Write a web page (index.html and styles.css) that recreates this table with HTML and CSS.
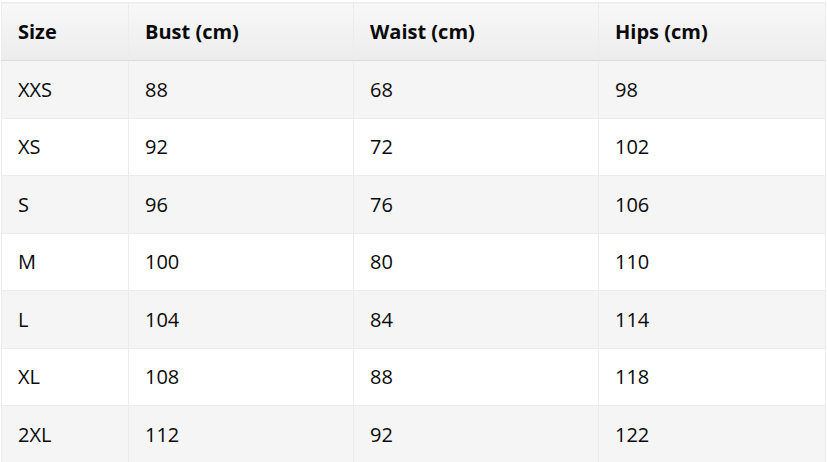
FILE: index.html
```html
<!DOCTYPE html>
<html>
<head>
<meta charset="utf-8">
<link rel="stylesheet" href="styles.css">
</head>
<body>
<table class="size-table">
  <colgroup>
    <col class="c1"><col class="c2"><col class="c3"><col class="c4">
  </colgroup>
  <thead>
    <tr><th>Size</th><th>Bust (cm)</th><th>Waist (cm)</th><th>Hips (cm)</th></tr>
  </thead>
  <tbody>
    <tr><td>XXS</td><td>88</td><td>68</td><td>98</td></tr>
    <tr><td>XS</td><td>92</td><td>72</td><td>102</td></tr>
    <tr><td>S</td><td>96</td><td>76</td><td>106</td></tr>
    <tr><td>M</td><td>100</td><td>80</td><td>110</td></tr>
    <tr><td>L</td><td>104</td><td>84</td><td>114</td></tr>
    <tr><td>XL</td><td>108</td><td>88</td><td>118</td></tr>
    <tr><td>2XL</td><td>112</td><td>92</td><td>122</td></tr>
  </tbody>
</table>
</body>
</html>
```
FILE: styles.css
```css
html, body {
  margin: 0;
  padding: 0;
  background: #ffffff;
}
body {
  padding: 2px 2px 0 1px;
  font-family: "Open Sans", "Noto Sans", sans-serif;
  color: #0a0a0a;
}
.size-table {
  width: 824px;
  border-collapse: collapse;
  table-layout: fixed;
  font-size: 20px;
}
.c1 { width: 127px; }
.c2 { width: 225px; }
.c3 { width: 245px; }
.c4 { width: 227px; }
.size-table th,
.size-table td {
  text-align: left;
  padding: 0 16px;
  border: 1px solid #ececec;
  box-sizing: border-box;
}
.size-table tbody tr {
  height: 57.5px;
}
.size-table thead tr {
  height: 58px;
}
.size-table th {
  font-weight: 700;
  background: linear-gradient(#f8f8f8, #ececec);
  border-bottom: 1px solid #dcdcdc;
}
.size-table tbody tr:nth-child(odd) td {
  background: #f5f5f5;
}
.size-table tbody tr:nth-child(even) td {
  background: #ffffff;
}
```
